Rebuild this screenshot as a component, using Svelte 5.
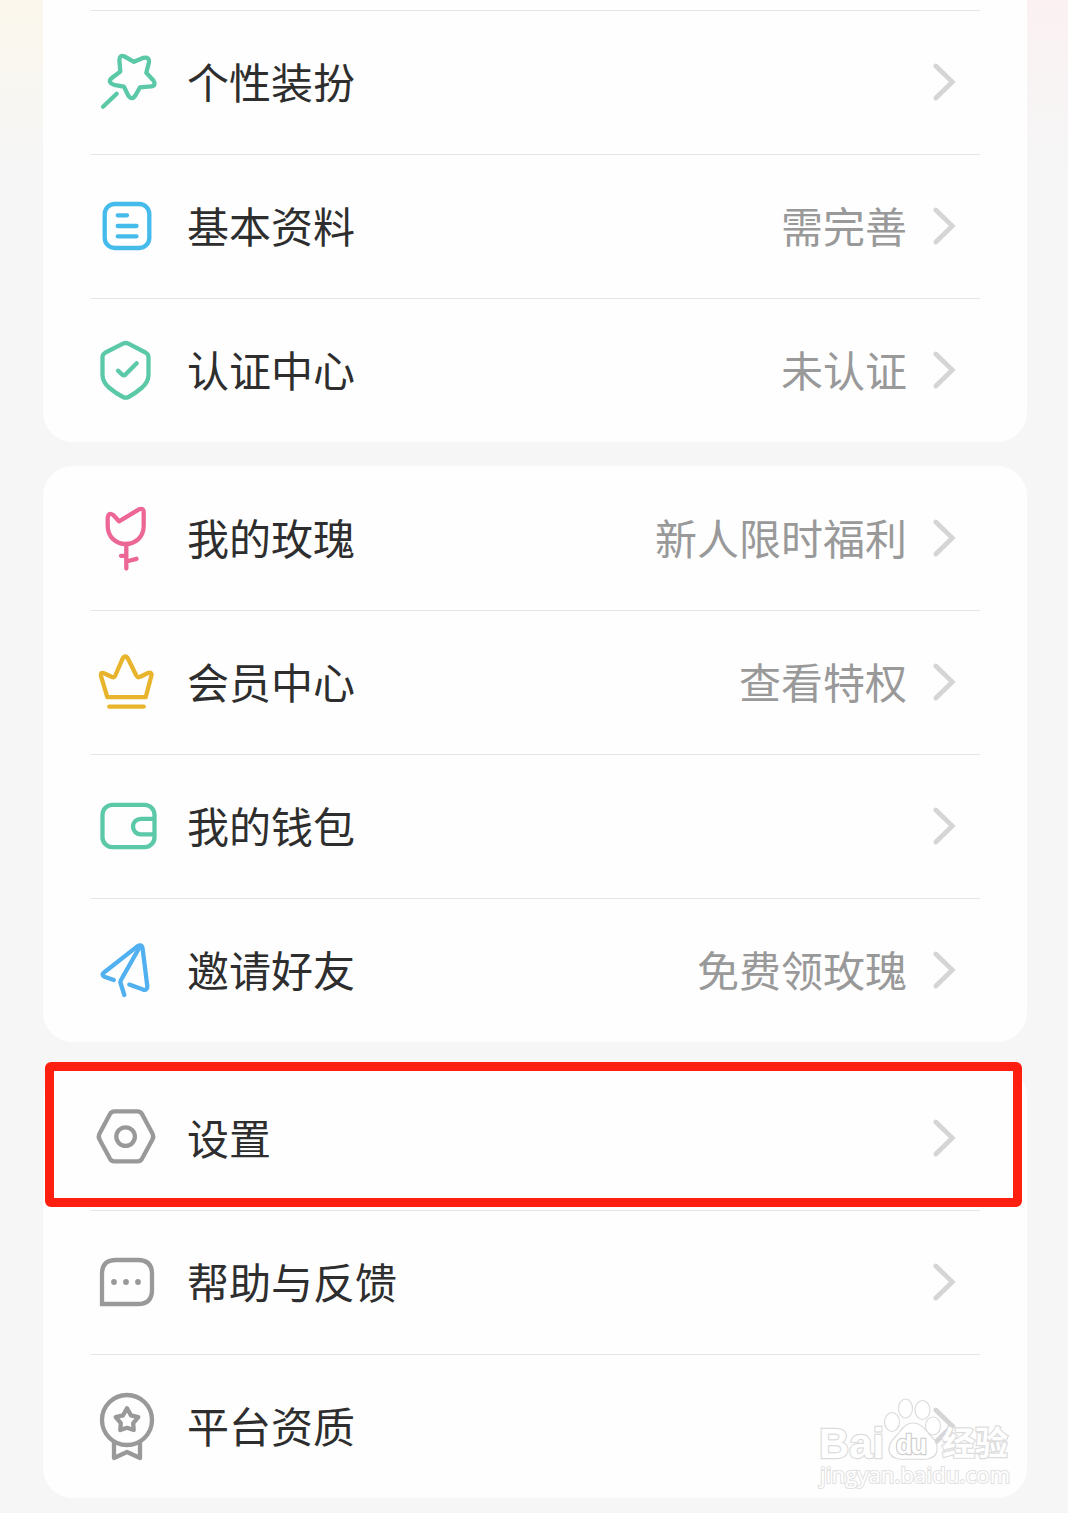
<script lang="ts">
	type Item = { icon: string; label: string; value?: string };

	const groups: Item[][] = [
		[
			{ icon: 'wand', label: '个性装扮' },
			{ icon: 'profile', label: '基本资料', value: '需完善' },
			{ icon: 'shield', label: '认证中心', value: '未认证' }
		],
		[
			{ icon: 'rose', label: '我的玫瑰', value: '新人限时福利' },
			{ icon: 'crown', label: '会员中心', value: '查看特权' },
			{ icon: 'wallet', label: '我的钱包' },
			{ icon: 'plane', label: '邀请好友', value: '免费领玫瑰' }
		],
		[
			{ icon: 'settings', label: '设置' },
			{ icon: 'chat', label: '帮助与反馈' },
			{ icon: 'medal', label: '平台资质' }
		]
	];
</script>

<main class="page">
	{#each groups as items, g}
		<section class="card" class:continued={g === 0}>
			{#each items as item}
				<div class="row">
					<svg class="icon {item.icon}" viewBox="0 0 72 72">
						{#if item.icon === 'wand'}
							<path
								d="M29.3 25.5L28.4 14.5Q28.4 8.3 33.5 10.5L43 15.8L52.5 11.8Q59 10.5 57.8 17L55.3 26.7L62.5 34.5Q65.5 39.7 60 40.4L49 41.3L44.5 49.2Q40.7 55 37 49.2L33 40.7L23 38.8Q16.5 36.7 20.2 32.5Z"
							/>
							<path d="M25.7 47.7L12 60.7" />
						{:else if item.icon === 'profile'}
							<rect x="13.7" y="14" width="44.6" height="44" rx="10" />
							<path d="M26.7 25.3H36M26.7 36H45.5M26.7 46.3H45.5" />
						{:else if item.icon === 'shield'}
							<path
								d="M32 9.7Q34.7 8.3 37.4 9.7L54.5 18.5Q57.5 20.2 57.5 23V41Q57.5 48 50.5 54Q44 59.5 37.5 63Q34.7 64.3 32 63Q25 59.5 18.5 54Q11.5 48 11.5 41V23Q11.5 20.2 14.5 18.5Z"
							/>
							<path d="M27 36.7L31.5 40.8Q33 42 34.5 40.6L45.7 29.3" />
						{:else if item.icon === 'rose'}
							<path
								d="M28 19.3L22.5 13.3Q16.7 9.5 16.7 17V24C16.7 35 25 42 34.7 42S52.7 35 52.7 24V10Q52.5 5.5 48 7.3Z"
							/>
							<path d="M35.3 42V66.5M30 53.8H35M35.3 59.5L45.5 56.8" />
						{:else if item.icon === 'crown'}
							<path
								d="M16.3 51.2L10 30Q9 26 13 27.2L21 31Q23.2 32 24.3 29.5L31.2 13.5Q34.3 7.5 37.4 13.5L45.3 29.5Q46.8 32 49.3 30.7L57 27Q61.3 25.6 60.3 30L54.7 51.2Z"
							/>
							<path d="M18.3 60.7H52.7" />
						{:else if item.icon === 'wallet'}
							<rect x="11.5" y="14.8" width="52" height="42.4" rx="10" />
							<path d="M62 28.8H49.8A7.8 7.8 0 0 0 49.8 44.4H62" />
						{:else if item.icon === 'plane'}
							<path
								d="M22.8 46L13.5 42.7Q10 41 13 38.5L46 12.6Q50.8 9.6 51.6 14.5L56.3 52Q56.4 57 52 55.6L38.3 50.6"
							/>
							<path d="M48.6 13.3L30 46Q29 47.7 29.7 49.5L33.3 61" />
						{:else if item.icon === 'settings'}
							<path
								d="M23.5 9.4H46.5Q49.5 9.4 51 12L61.3 31.2Q63.2 34.5 61.3 37.8L51 56.8Q49.5 59.3 46.5 59.3H23.5Q20.5 59.3 19 56.8L8.7 37.8Q6.8 34.5 8.7 31.2L19 12Q20.5 9.4 23.5 9.4Z"
							/>
							<circle cx="34.6" cy="34.6" r="9.3" />
						{:else if item.icon === 'chat'}
							<path
								class="square"
								d="M11 58V28Q11 14 25 14H47Q61 14 61 28V44Q61 58 47 58Z"
							/>
							<g class="dots">
								<circle cx="23" cy="36" r="2.9" />
								<circle cx="35" cy="36" r="2.9" />
								<circle cx="47" cy="36" r="2.9" />
							</g>
						{:else if item.icon === 'medal'}
							<circle cx="36" cy="30" r="25" />
							<path
								d="M36 18.3L39.9 25.3L47.3 27.2L42.2 33.2L42.7 40L36 37.8L29.3 40L29.8 33.2L24.7 27.2L32.1 25.3Z"
							/>
							<path d="M23 52.5V68L36 62L49 68V52.5" />
						{/if}
					</svg>
					<span class="label">{item.label}</span>
					{#if item.value}
						<span class="value">{item.value}</span>
					{/if}
					<svg class="chevron" viewBox="0 0 24 40"><path d="M3.8 4L20.3 20L3.8 36" /></svg>
				</div>
			{/each}
		</section>
	{/each}

	<div class="highlight"></div>

	<svg class="watermark" viewBox="0 0 200 100">
		<text class="brand" x="3" y="68" font-size="43" textLength="65" lengthAdjust="spacingAndGlyphs">Bai</text>
		<g class="paw">
			<ellipse cx="76" cy="32" rx="7.5" ry="9.5" />
			<ellipse cx="89.5" cy="18.5" rx="7" ry="9.5" />
			<ellipse cx="106.5" cy="20" rx="7.5" ry="9.5" />
			<ellipse cx="117" cy="36" rx="7.5" ry="9" />
			<path
				d="M97 33C105 33 109 39 113 44C119 50 122 54 121 61C119 70 109 70 97 69C85 70 75 70 73 61C72 54 77 49 82 44C86 39 89 33 97 33Z"
			/>
		</g>
		<text class="brand thin" x="80" y="64" font-size="27" textLength="31">du</text>
		<text class="brand" x="126" y="65" font-size="33" textLength="66">经验</text>
		<text class="site" x="4" y="93" font-size="22" textLength="190">jingyan.baidu.com</text>
	</svg>
</main>

<style>
	:global(body) {
		background: #f6f6f6;
	}

	.page {
		position: relative;
		box-sizing: border-box;
		height: 1513px;
		padding: 0 41px 0 43px;
		display: flex;
		flex-direction: column;
		gap: 24px;
		overflow: hidden;
		font-family: 'Noto Sans CJK SC', sans-serif;
		background:
			linear-gradient(#fbf7ec, #f6f6f600 165px) left / 43px 100% no-repeat,
			linear-gradient(#fbf1f2, #f6f6f600 165px) right / 41px 100% no-repeat,
			#f6f6f6;
	}

	.card {
		padding: 0 47px 0 48px;
		background: #fefefe;
		border-radius: 30px;
	}

	.card.continued {
		padding-top: 10px;
		border-radius: 0 0 30px 30px;
	}

	.row {
		box-sizing: border-box;
		height: 144px;
		display: flex;
		align-items: center;
		box-shadow: inset 0 1px #e5e5e5;
		padding-right: 24px;
	}

	.card:not(.continued) .row:first-child {
		box-shadow: none;
	}

	.icon {
		width: 72px;
		height: 72px;
		flex: none;
		fill: none;
		stroke: #999;
		stroke-width: 4.3;
		stroke-linecap: round;
		stroke-linejoin: round;
	}

	.wand,
	.shield,
	.wallet {
		stroke: #5bc8a8;
	}

	.profile {
		stroke: #45bbeb;
	}

	.rose {
		stroke: #ec6796;
	}

	.crown {
		stroke: #e8b42c;
	}

	.plane {
		stroke: #50b0f0;
	}

	.square {
		stroke-linejoin: miter;
	}

	.dots {
		fill: #999;
		stroke: none;
	}

	.label,
	.value {
		font-size: 42px;
		line-height: 60px;
		padding-bottom: 2px;
		white-space: nowrap;
	}

	.label {
		margin-left: 24px;
		color: #2e2e2e;
	}

	.value {
		margin-left: auto;
		margin-right: 25px;
		color: #999;
	}

	.chevron {
		width: 24px;
		height: 40px;
		flex: none;
		fill: none;
		stroke: #d5d5d5;
		stroke-width: 4.8;
		stroke-linecap: round;
		stroke-linejoin: miter;
	}

	.label + .chevron {
		margin-left: auto;
	}

	.highlight {
		position: absolute;
		box-sizing: border-box;
		left: 45px;
		top: 1062px;
		width: 977px;
		height: 145px;
		border: 9px solid #ff1f10;
		border-radius: 6px;
	}

	.watermark {
		position: absolute;
		left: 816px;
		top: 1390px;
		width: 200px;
		height: 100px;
		fill: #fff;
		stroke: #dcdcdc;
		stroke-width: 1.2;
	}

	.brand {
		font-family: 'Liberation Sans', 'Noto Sans CJK SC', sans-serif;
		font-weight: bold;
		paint-order: stroke;
		stroke-width: 2.4;
	}

	.thin {
		stroke: #cfcfcf;
	}

	.site {
		font-family: 'Open Sans', sans-serif;
		paint-order: stroke;
		stroke-width: 2.2;
		stroke: #e2e2e2;
	}
</style>
